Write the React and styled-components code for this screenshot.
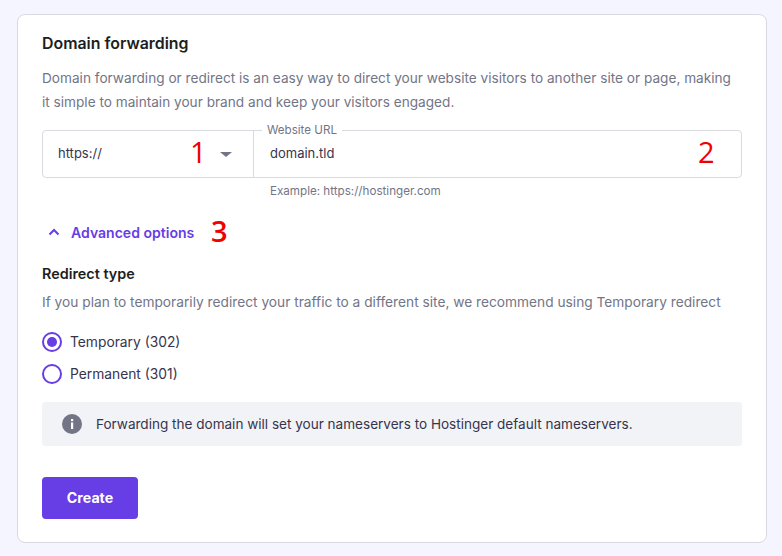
import React from "react";
import styled, { createGlobalStyle } from "styled-components";

const Global = createGlobalStyle`
  html, body { margin: 0; background: #f4f5ff; }
  * { box-sizing: border-box; }
  body { font-family: "Inter", "Liberation Sans", sans-serif; }
`;
const Page = styled.div`
  width: 782px;
  height: 556px;
  padding: 14px 15px 13px 17px;
  overflow: hidden;
`;
const Card = styled.div`
  height: 529px;
  background: #fff;
  border: 1px solid #d8dae0;
  border-radius: 8px;
  padding: 19px 24px 23px;
  display: flex;
  flex-direction: column;
`;
const Title = styled.h3`
  margin: 0;
  font-size: 15.9px;
  line-height: 20px;
  font-weight: 600;
  color: #1d1e20;
`;
const Intro = styled.p`
  margin: 12px 0 0;
  font-size: 13.64px;
  line-height: 24px;
  color: #727586;
`;
const FieldGroup = styled.div`
  position: relative;
  display: flex;
  margin-top: 16px;
  height: 48px;
  border: 1px solid #d8dae0;
  border-radius: 4px;
`;
const Select = styled.div`
  width: 211px;
  display: flex;
  align-items: center;
  justify-content: space-between;
  padding: 0 21px 2px 15px;
  border-right: 1px solid #d8dae0;
  font-size: 13px;
  color: #36344d;
`;
const Caret = styled.span`
  width: 0;
  height: 0;
  margin-top: 2px;
  border-left: 6px solid transparent;
  border-right: 6px solid transparent;
  border-top: 5px solid #727586;
`;
const UrlField = styled.div`
  flex: 1;
  display: flex;
  align-items: center;
  padding: 0 0 2px 16px;
  font-size: 13px;
  color: #36344d;
`;
const FloatLabel = styled.span`
  position: absolute;
  left: 219px;
  top: -8px;
  padding: 0 5px;
  background: #fff;
  font-size: 11.6px;
  line-height: 14px;
  color: #727586;
`;
const Mark = styled.span`
  position: absolute;
  left: ${(p) => p.$left}px;
  top: ${(p) => p.$top}px;
  font-family: "Open Sans", sans-serif;
  font-size: 29px;
  line-height: 32px;
  color: #f00000;
`;
const Helper = styled.div`
  margin: 6px 0 0 228px;
  font-size: 11.64px;
  line-height: 14px;
  color: #727586;
`;
const Advanced = styled.div`
  position: relative;
  display: flex;
  align-items: center;
  gap: 10px;
  margin: 24px 0 0 5px;
  height: 20px;
  font-size: 14.05px;
  font-weight: 600;
  color: #673de6;
`;
const Subtitle = styled.h4`
  margin: 22px 0 0;
  font-size: 14.4px;
  line-height: 20px;
  font-weight: 600;
  color: #1d1e20;
`;
const Help = styled.p`
  margin: 8px 0 0;
  font-size: 13.72px;
  line-height: 20px;
  color: #727586;
`;
const Radios = styled.div`
  display: flex;
  flex-direction: column;
  gap: 12px;
  margin-top: 20px;
`;
const RadioRow = styled.label`
  display: flex;
  align-items: center;
  gap: 8px;
  height: 20px;
  font-size: 13.8px;
  color: #36344d;
`;
const RadioDot = styled.span`
  width: 20px;
  height: 20px;
  border: 2px solid #673de6;
  border-radius: 50%;
  display: flex;
  align-items: center;
  justify-content: center;
  &::after {
    content: "";
    display: ${(p) => (p.$on ? "block" : "none")};
    width: 10px;
    height: 10px;
    border-radius: 50%;
    background: #673de6;
  }
`;
const Alert = styled.div`
  display: flex;
  align-items: center;
  gap: 14px;
  height: 44px;
  margin-top: 18px;
  padding-left: 20px;
  background: #f2f3f6;
  border-radius: 4px;
  font-size: 13.56px;
  color: #36344d;
`;
const CreateButton = styled.button`
  width: 96px;
  height: 42px;
  margin-top: 31px;
  padding-bottom: 2px;
  border: 0;
  border-radius: 4px;
  background: #673de6;
  color: #fff;
  font-family: inherit;
  font-size: 14.2px;
  font-weight: 700;
`;

export default function App() {
  return (
    <>
      <Global />
      <Page>
        <Card>
          <Title>Domain forwarding</Title>
          <Intro>
            Domain forwarding or redirect is an easy way to direct your website visitors to another site or page, making
            <br />
            it simple to maintain your brand and keep your visitors engaged.
          </Intro>
          <FieldGroup>
            <Select>
              https://
              <Caret />
            </Select>
            <UrlField>domain.tld</UrlField>
            <FloatLabel>Website URL</FloatLabel>
            <Mark $left={147} $top={5}>1</Mark>
            <Mark $left={655} $top={5}>2</Mark>
          </FieldGroup>
          <Helper>Example: https://hostinger.com</Helper>
          <Advanced>
            <svg width="14" height="14" viewBox="0 0 14 14" fill="none" stroke="#673de6" strokeWidth="2">
              <path d="M2.500 9.500L7 5l4.500 4.500" />
            </svg>
            Advanced options
            <Mark $left={164} $top={-7}>3</Mark>
          </Advanced>
          <Subtitle>Redirect type</Subtitle>
          <Help>If you plan to temporarily redirect your traffic to a different site, we recommend using Temporary redirect</Help>
          <Radios>
            <RadioRow><RadioDot $on />Temporary (302)</RadioRow>
            <RadioRow><RadioDot />Permanent (301)</RadioRow>
          </Radios>
          <Alert>
            <svg width="20" height="20" viewBox="0 0 20 20">
              <circle cx="10" cy="10" r="10" fill="#727586" />
              <rect x="9" y="8.500" width="2.200" height="6.500" fill="#fff" />
              <rect x="9" y="5" width="2.200" height="2.200" fill="#fff" />
            </svg>
            Forwarding the domain will set your nameservers to Hostinger default nameservers.
          </Alert>
          <CreateButton>Create</CreateButton>
        </Card>
      </Page>
    </>
  );
}
